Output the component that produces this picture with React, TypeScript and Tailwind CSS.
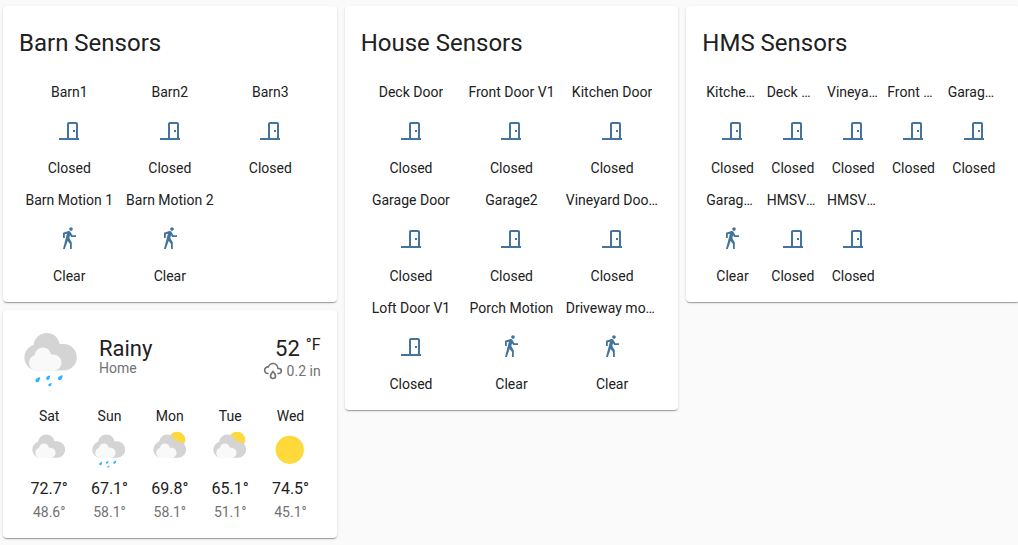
import type { ReactNode } from "react";

type Sensor = { name: string; kind: "door" | "motion" };
type Condition = "cloudy" | "rainy" | "partlycloudy" | "sunny";

const BARN: Sensor[] = [
  { name: "Barn1", kind: "door" },
  { name: "Barn2", kind: "door" },
  { name: "Barn3", kind: "door" },
  { name: "Barn Motion 1", kind: "motion" },
  { name: "Barn Motion 2", kind: "motion" },
];

const HOUSE: Sensor[] = [
  { name: "Deck Door", kind: "door" },
  { name: "Front Door V1", kind: "door" },
  { name: "Kitchen Door", kind: "door" },
  { name: "Garage Door", kind: "door" },
  { name: "Garage2", kind: "door" },
  { name: "Vineyard Door V1", kind: "door" },
  { name: "Loft Door V1", kind: "door" },
  { name: "Porch Motion", kind: "motion" },
  { name: "Driveway motion", kind: "motion" },
];

const HMS: Sensor[] = [
  { name: "Kitchen Door", kind: "door" },
  { name: "Deck Door", kind: "door" },
  { name: "Vineyard Door", kind: "door" },
  { name: "Front Door", kind: "door" },
  { name: "Garage Door", kind: "door" },
  { name: "Garage Motion", kind: "motion" },
  { name: "HMSV1 Door", kind: "door" },
  { name: "HMSV2 Door", kind: "door" },
];

const FORECAST: { day: string; condition: Condition; high: string; low: string }[] = [
  { day: "Sat", condition: "cloudy", high: "72.7°", low: "48.6°" },
  { day: "Sun", condition: "rainy", high: "67.1°", low: "58.1°" },
  { day: "Mon", condition: "partlycloudy", high: "69.8°", low: "58.1°" },
  { day: "Tue", condition: "partlycloudy", high: "65.1°", low: "51.1°" },
  { day: "Wed", condition: "sunny", high: "74.5°", low: "45.1°" },
];

const ICONS = {
  door: "M16,11H18V13H16V11M12,3H19C20.11,3 21,3.89 21,5V19H22V21H2V19H10V5C10,3.89 10.89,3 12,3M12,5V19H19V5H12Z",
  motion:
    "M14.12,10H19V8.2H15.38L13.38,4.87C13.08,4.37 12.54,4.03 11.92,4.03C11.74,4.03 11.58,4.06 11.42,4.11L6,5.8V11H7.8V7.33L9.91,6.67L6,22H7.8L10.67,13.89L13,17V22H14.8V15.59L12.31,11.05L13.04,8.18M14,3.8C15,3.8 15.8,3 15.8,2C15.8,1 15,0.2 14,0.2C13,0.2 12.2,1 12.2,2C12.2,3 13,3.8 14,3.8Z",
  rain:
    "M6,14.03A1,1 0 0,1 7,15.03C7,15.58 6.55,16.03 6,16.03C3.24,16.03 1,13.79 1,11.03C1,8.27 3.24,6.03 6,6.03C7,3.68 9.3,2.03 12,2.03C15.43,2.03 18.24,4.69 18.5,8.06L19,8.03A4,4 0 0,1 23,12.03C23,14.23 21.21,16.03 19,16.03H18C17.45,16.03 17,15.58 17,15.03C17,14.47 17.45,14.03 18,14.03H19A2,2 0 0,0 21,12.03A2,2 0 0,0 19,10.03H17V9.03C17,6.27 14.76,4.03 12,4.03C9.5,4.03 7.45,5.84 7.06,8.21C6.73,8.09 6.37,8.03 6,8.03A3,3 0 0,0 3,11.03A3,3 0 0,0 6,14.03M12,14.15C12.18,14.39 12.37,14.66 12.56,14.94C13,15.56 14,17.03 14,18C14,19.11 13.1,20 12,20A2,2 0 0,1 10,18C10,17.03 11,15.56 11.44,14.94C11.63,14.66 11.82,14.4 12,14.15M12,11.03L11.5,11.59C11.5,11.59 10.65,12.55 9.79,13.81C8.93,15.06 8,16.56 8,18A4,4 0 0,0 12,22A4,4 0 0,0 16,18C16,16.56 15.07,15.06 14.21,13.81C13.35,12.55 12.5,11.59 12.5,11.59",
};

function Icon({ path, className }: { path: string; className: string }) {
  return (
    <svg viewBox="0 0 24 24" fill="currentColor" aria-hidden="true" className={className}>
      <path d={path} />
    </svg>
  );
}

function WeatherIcon({ condition, className }: { condition: Condition; className: string }) {
  return (
    <svg viewBox="0 0 17 17" aria-hidden="true" className={className}>
      {condition === "sunny" && <circle cx="8.4" cy="8.4" r="6" fill="#fdd93c" />}
      {condition === "partlycloudy" && <circle cx="11.497" cy="4.211" r="3.484" fill="#fdd93c" />}
      {condition !== "sunny" && (
        <>
          <path
            fill="#d4d4d4"
            d="m3.8863 5.035c-0.54892 0.16898-1.04 0.46637-1.4372 0.8636-0.63077 0.63041-1.0206 1.4933-1.0206 2.455 0 1.9251 1.5589 3.4682 3.4837 3.4682h6.9688c1.9251 0 3.484-1.5981 3.484-3.5232 0-1.9251-1.5589-3.5232-3.484-3.5232h-1.0834c-0.25294-1.6916-1.6986-2.9083-3.4463-2.9083-1.7995 0-3.2805 1.4153-3.465 3.1679"
          />
          <path
            fill="#f9f9f9"
            d="m4.1996 7.6995c-0.33902 0.10407-0.64276 0.28787-0.88794 0.5334-0.39017 0.38982-0.63147 0.92322-0.63147 1.5176 0 1.1896 0.96414 2.1431 2.1537 2.1431h4.3071c1.1896 0 2.153-0.98742 2.153-2.1777 0-1.1896-0.96344-2.1777-2.153-2.1777h-0.66992c-0.15593-1.0449-1.0499-1.7974-2.1297-1.7974-1.112 0-2.0274 0.87524-2.1417 1.9586"
          />
        </>
      )}
      {condition === "rainy" && (
        <g fill="#30b3ff">
          <path d="m5.2852 14.734c-0.22401 0.24765-0.57115 0.2988-0.77505 0.11395-0.20391-0.1845-0.18732-0.53481 0.036689-0.78281 0.14817-0.16298 0.59126-0.32914 0.87559-0.42369 0.12453-0.04092 0.22684 0.05186 0.19791 0.17956-0.065617 0.2921-0.18732 0.74965-0.33514 0.91299" />
          <path d="m11.257 14.163c-0.22437 0.24765-0.57115 0.2988-0.77505 0.11395-0.2039-0.1845-0.18768-0.53481 0.03669-0.78281 0.14817-0.16298 0.59126-0.32914 0.8756-0.42369 0.12453-0.04092 0.22684 0.05186 0.19791 0.17956-0.06562 0.2921-0.18732 0.74965-0.33514 0.91299" />
          <path d="m8.432 15.878c-0.15452 0.17039-0.3937 0.20567-0.53446 0.07867-0.14041-0.12735-0.12876-0.36865 0.025753-0.53975 0.10195-0.11218 0.40711-0.22684 0.60325-0.29175 0.085725-0.02858 0.15628 0.03563 0.13652 0.12382-0.045508 0.20108-0.12912 0.51647-0.23107 0.629" />
          <path d="m7.991 14.118c-0.19226 0.21237-0.49001 0.25612-0.66499 0.09737-0.17462-0.15804-0.16051-0.45861 0.03175-0.67098 0.12665-0.14005 0.50729-0.28293 0.75071-0.36336 0.10689-0.03563 0.19473 0.0441 0.17004 0.15346-0.056092 0.25082-0.16051 0.64347-0.28751 0.78352" />
        </g>
      )}
    </svg>
  );
}

function Card({ children }: { children: ReactNode }) {
  return (
    <section className="rounded bg-white shadow-[0_2px_1px_-1px_rgba(0,0,0,0.2),0_1px_1px_0_rgba(0,0,0,0.14),0_1px_3px_0_rgba(0,0,0,0.12)]">
      {children}
    </section>
  );
}

function GlanceCard({ title, sensors, columns }: { title: string; sensors: Sensor[]; columns: 3 | 5 }) {
  return (
    <Card>
      <h2 className="px-4 pt-[21px] pb-[23px] text-2xl">{title}</h2>
      <div className={`grid px-4 pb-1 ${columns === 5 ? "grid-cols-5" : "grid-cols-3"}`}>
        {sensors.map((s, i) => (
          <button key={i} type="button" className="mb-3 flex min-w-0 cursor-pointer flex-col items-center px-1 text-sm">
            <span className="max-w-full truncate">{s.name}</span>
            <Icon path={ICONS[s.kind]} className="mt-[17px] mb-[15px] size-6 text-[#44739e]" />
            <span>{s.kind === "door" ? "Closed" : "Clear"}</span>
          </button>
        ))}
      </div>
    </Card>
  );
}

function WeatherCard() {
  return (
    <Card>
      <div className="p-4">
        <div className="flex items-start">
          <WeatherIcon condition="rainy" className="mr-4 size-16" />
          <div className="flex-1 pt-[11px]">
            <div className="text-[22px] leading-6">Rainy</div>
            <div className="text-sm leading-[14px] text-[#727272]">Home</div>
          </div>
          <div className="flex flex-col items-end pt-[11px]">
            <div className="flex items-start gap-1.5 text-[22px] leading-6">
              52 <span className="text-base leading-4">°F</span>
            </div>
            <div className="flex items-center gap-1 text-sm text-[#727272]">
              <Icon path={ICONS.rain} className="size-5" />
              0.2 in
            </div>
          </div>
        </div>
        <div className="mt-4 grid grid-cols-5">
          {FORECAST.map((f) => (
            <div key={f.day} className="flex flex-col items-center text-sm">
              <div>{f.day}</div>
              <WeatherIcon condition={f.condition} className="mt-1 size-10" />
              <div className="mt-2 text-base leading-[22px]">{f.high}</div>
              <div className="mt-0.5 text-[#727272]">{f.low}</div>
            </div>
          ))}
        </div>
      </div>
    </Card>
  );
}

export default function App() {
  return (
    <div className="min-h-screen overflow-x-clip bg-[#fafafa] font-['Roboto',sans-serif] text-[#212121]">
      <main className="-mr-0.5 grid grid-cols-3 items-start gap-2 pt-1.5 pb-1.5 pl-[3px]">
        <div className="flex flex-col gap-2">
          <GlanceCard title="Barn Sensors" sensors={BARN} columns={3} />
          <WeatherCard />
        </div>
        <GlanceCard title="House Sensors" sensors={HOUSE} columns={3} />
        <GlanceCard title="HMS Sensors" sensors={HMS} columns={5} />
      </main>
    </div>
  );
}
